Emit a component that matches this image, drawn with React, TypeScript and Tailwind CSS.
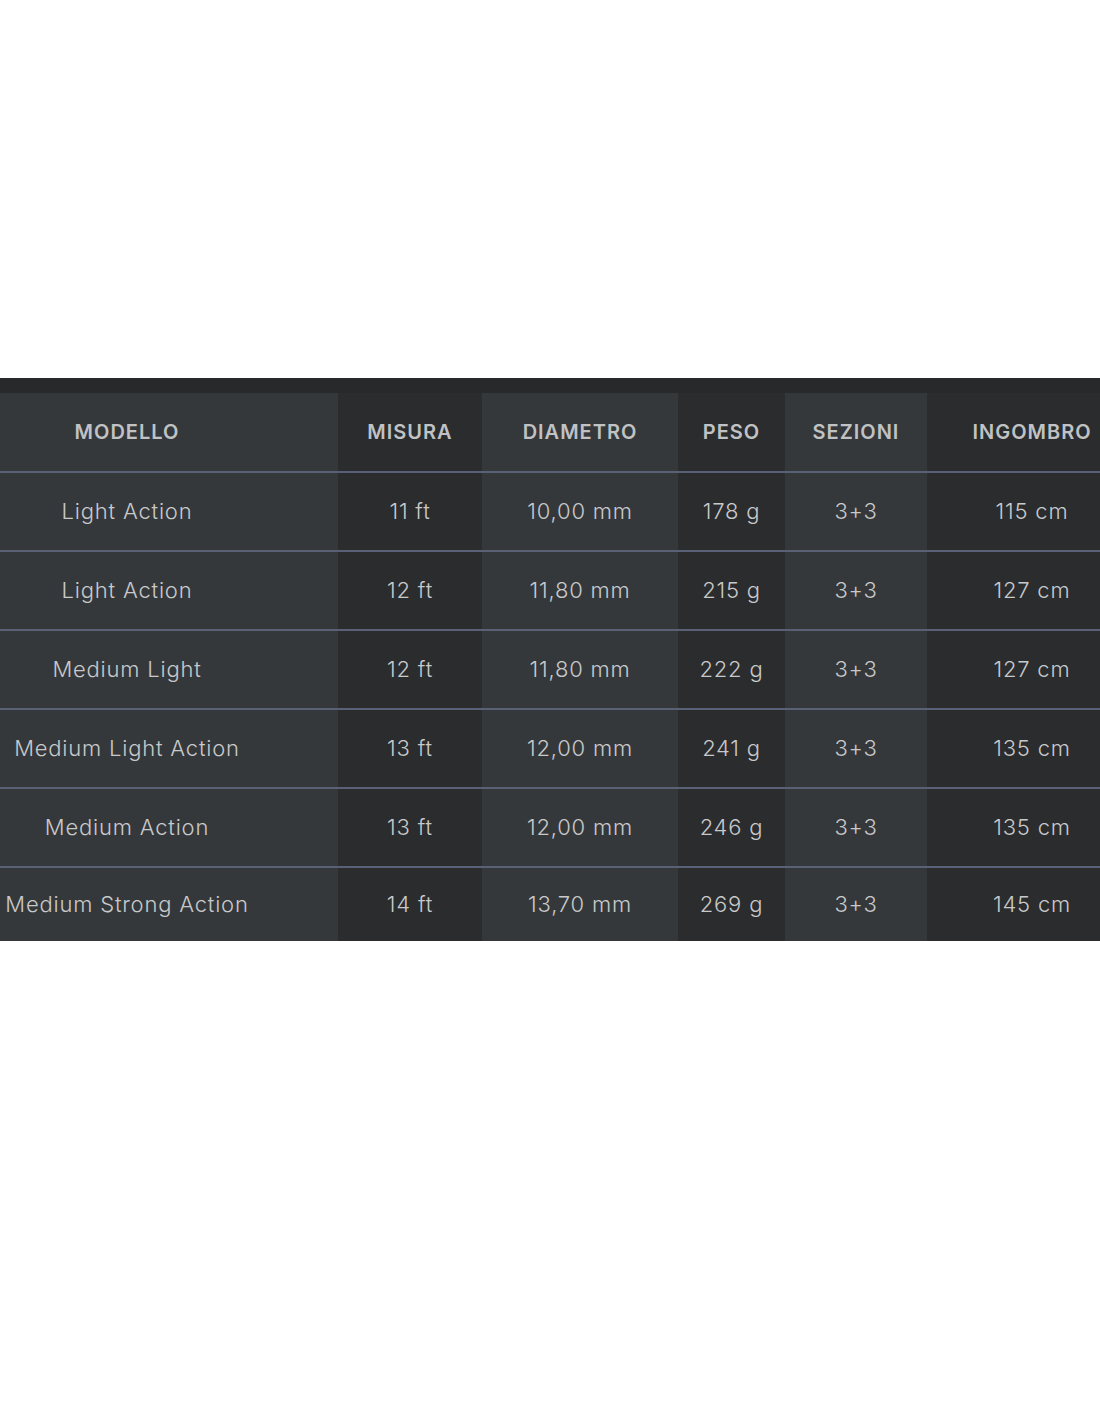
import React from "react";

const rows = [
    ["Light Action", "11 ft", "10,00 mm", "178 g", "3+3", "115 cm"],
    ["Light Action", "12 ft", "11,80 mm", "215 g", "3+3", "127 cm"],
    ["Medium Light", "12 ft", "11,80 mm", "222 g", "3+3", "127 cm"],
    ["Medium Light Action", "13 ft", "12,00 mm", "241 g", "3+3", "135 cm"],
    ["Medium Action", "13 ft", "12,00 mm", "246 g", "3+3", "135 cm"],
    ["Medium Strong Action", "14 ft", "13,70 mm", "269 g", "3+3", "145 cm"],
];

const headers = ["MODELLO", "MISURA", "DIAMETRO", "PESO", "SEZIONI", "INGOMBRO"];

// column backgrounds alternate light / dark
const colBg = [
    "bg-[#35383b] pr-[84px]",
    "bg-[#2b2c2e]",
    "bg-[#35383b]",
    "bg-[#2b2c2e]",
    "bg-[#35383b]",
    "bg-[#2b2c2e]",
];

const gridCols = "grid grid-cols-[338px_144px_196px_107px_142px_210px] w-[1137px]";

export default function App() {
    return (
        <div
            className="min-h-[1422px] bg-white pt-[378px] overflow-hidden"
            style={{ fontFamily: "Inter, 'Noto Sans', sans-serif" }}
        >
            <div className="w-[1100px] overflow-hidden bg-[#28292b] pt-[15px]">
                {/* Header */}
                <div className={`${gridCols} h-[78px]`}>
                    {headers.map((h, i) => (
                        <div
                            key={h}
                            className={`${colBg[i]} flex items-center justify-center text-[20px] font-semibold tracking-[1px] text-[#c0c2c4] whitespace-nowrap`}
                        >
                            {h}
                        </div>
                    ))}
                </div>

                {/* Body */}
                {rows.map((r, ri) => (
                    <div
                        key={ri}
                        className={`${gridCols} border-t-2 border-[#5a6176] ${ri === rows.length - 1 ? "h-[75px]" : "h-[79px]"}`}
                    >
                        {r.map((c, ci) => (
                            <div
                                key={ci}
                                className={`${colBg[ci]} flex items-center justify-center text-[22px] font-light tracking-[0.8px] text-[#c8c9ca] whitespace-nowrap`}
                            >
                                {c}
                            </div>
                        ))}
                    </div>
                ))}
            </div>
        </div>
    );
}
